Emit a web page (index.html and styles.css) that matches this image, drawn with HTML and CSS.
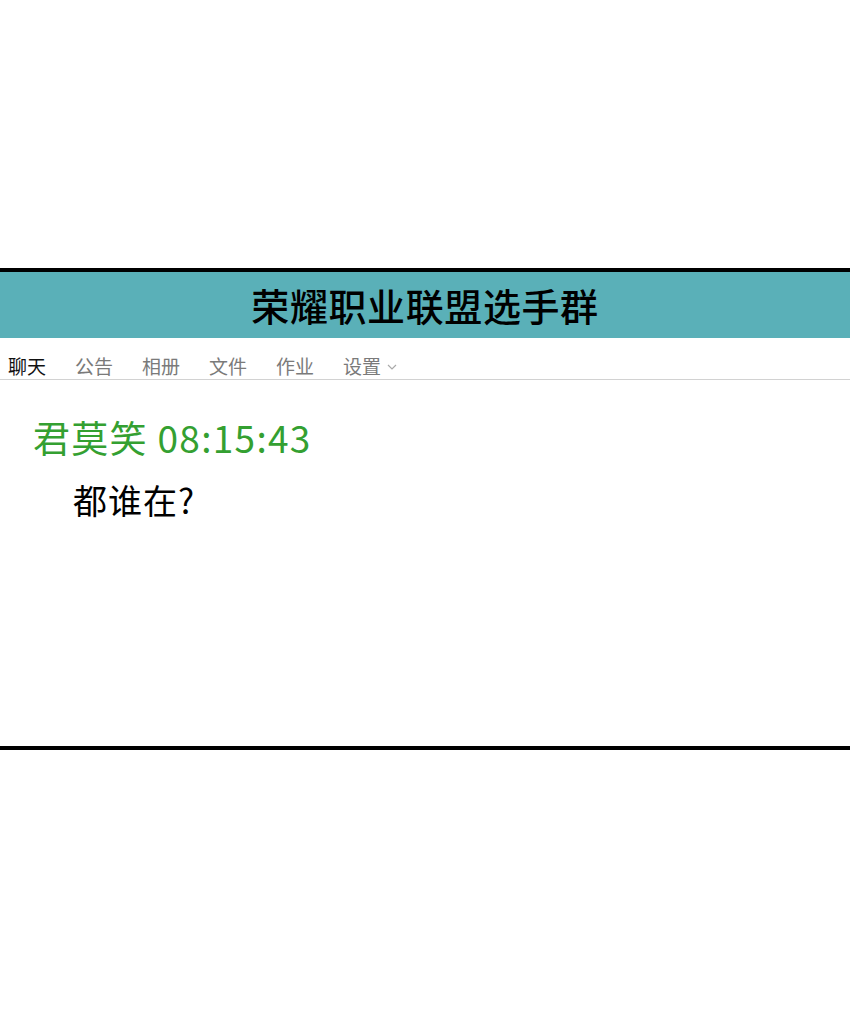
FILE: index.html
```html
<!DOCTYPE html>
<html>
<head>
    <meta charset="utf-8" />
    <title>荣耀职业联盟选手群</title>
    <link rel="stylesheet" href="styles.css">
</head>
<body>
    <div class="page">
        <div class="chat">
            <div class="chat-title">荣耀职业联盟选手群</div>
            <div class="tabs">
                <span class="tab active">聊天</span>
                <span class="tab">公告</span>
                <span class="tab">相册</span>
                <span class="tab">文件</span>
                <span class="tab">作业</span>
                <span class="tab">设置
                    <svg class="caret" width="10" height="6" viewBox="0 0 10 6"><path d="M1 1 L5 5 L9 1" fill="none" stroke="#aaa" stroke-width="1.2"/></svg>
                </span>
            </div>
            <div class="messages">
                <div class="msg">
                    <div class="sender">君莫笑 08:15:43</div>
                    <div class="text">都谁在?</div>
                </div>
            </div>
        </div>
    </div>
</body>
</html>
```

FILE: styles.css
```css
body {
    margin: 0;
    background: #fff;
    font-family: "Noto Sans CJK SC", "Noto Sans", sans-serif;
}

.page {
    padding-top: 268px;
    height: 1021px;
    box-sizing: border-box;
}

.chat {
    border-top: 4px solid #000;
    border-bottom: 4px solid #000;
}

.chat-title {
    height: 66px;
    background-color: #5ab0b8;
    color: #000;
    font-size: 38px;
    font-weight: 500;
    line-height: 66px;
    text-align: center;
    letter-spacing: 0.6px;
}

.tabs {
    height: 42px;
    border-bottom: 1px solid #d2d2d2;
    display: flex;
    align-items: flex-end;
    gap: 29px;
    padding-left: 8px;
    box-sizing: border-box;
    padding-bottom: 0;
}

.tab {
    font-size: 19px;
    color: #7a7a7a;
    display: flex;
    align-items: center;
    gap: 6px;
}

.tab.active {
    color: #111;
}

.caret {
    margin-top: 2px;
}

.messages {
    height: 366px;
    padding: 34px 0 0 33px;
    box-sizing: border-box;
}

.sender {
    color: #34a031;
    font-size: 37px;
    line-height: 46px;
    letter-spacing: 1.3px;
}

.text {
    color: #000;
    font-size: 34px;
    line-height: 42px;
    margin-top: 19px;
    padding-left: 40px;
    letter-spacing: 1px;
}
```
